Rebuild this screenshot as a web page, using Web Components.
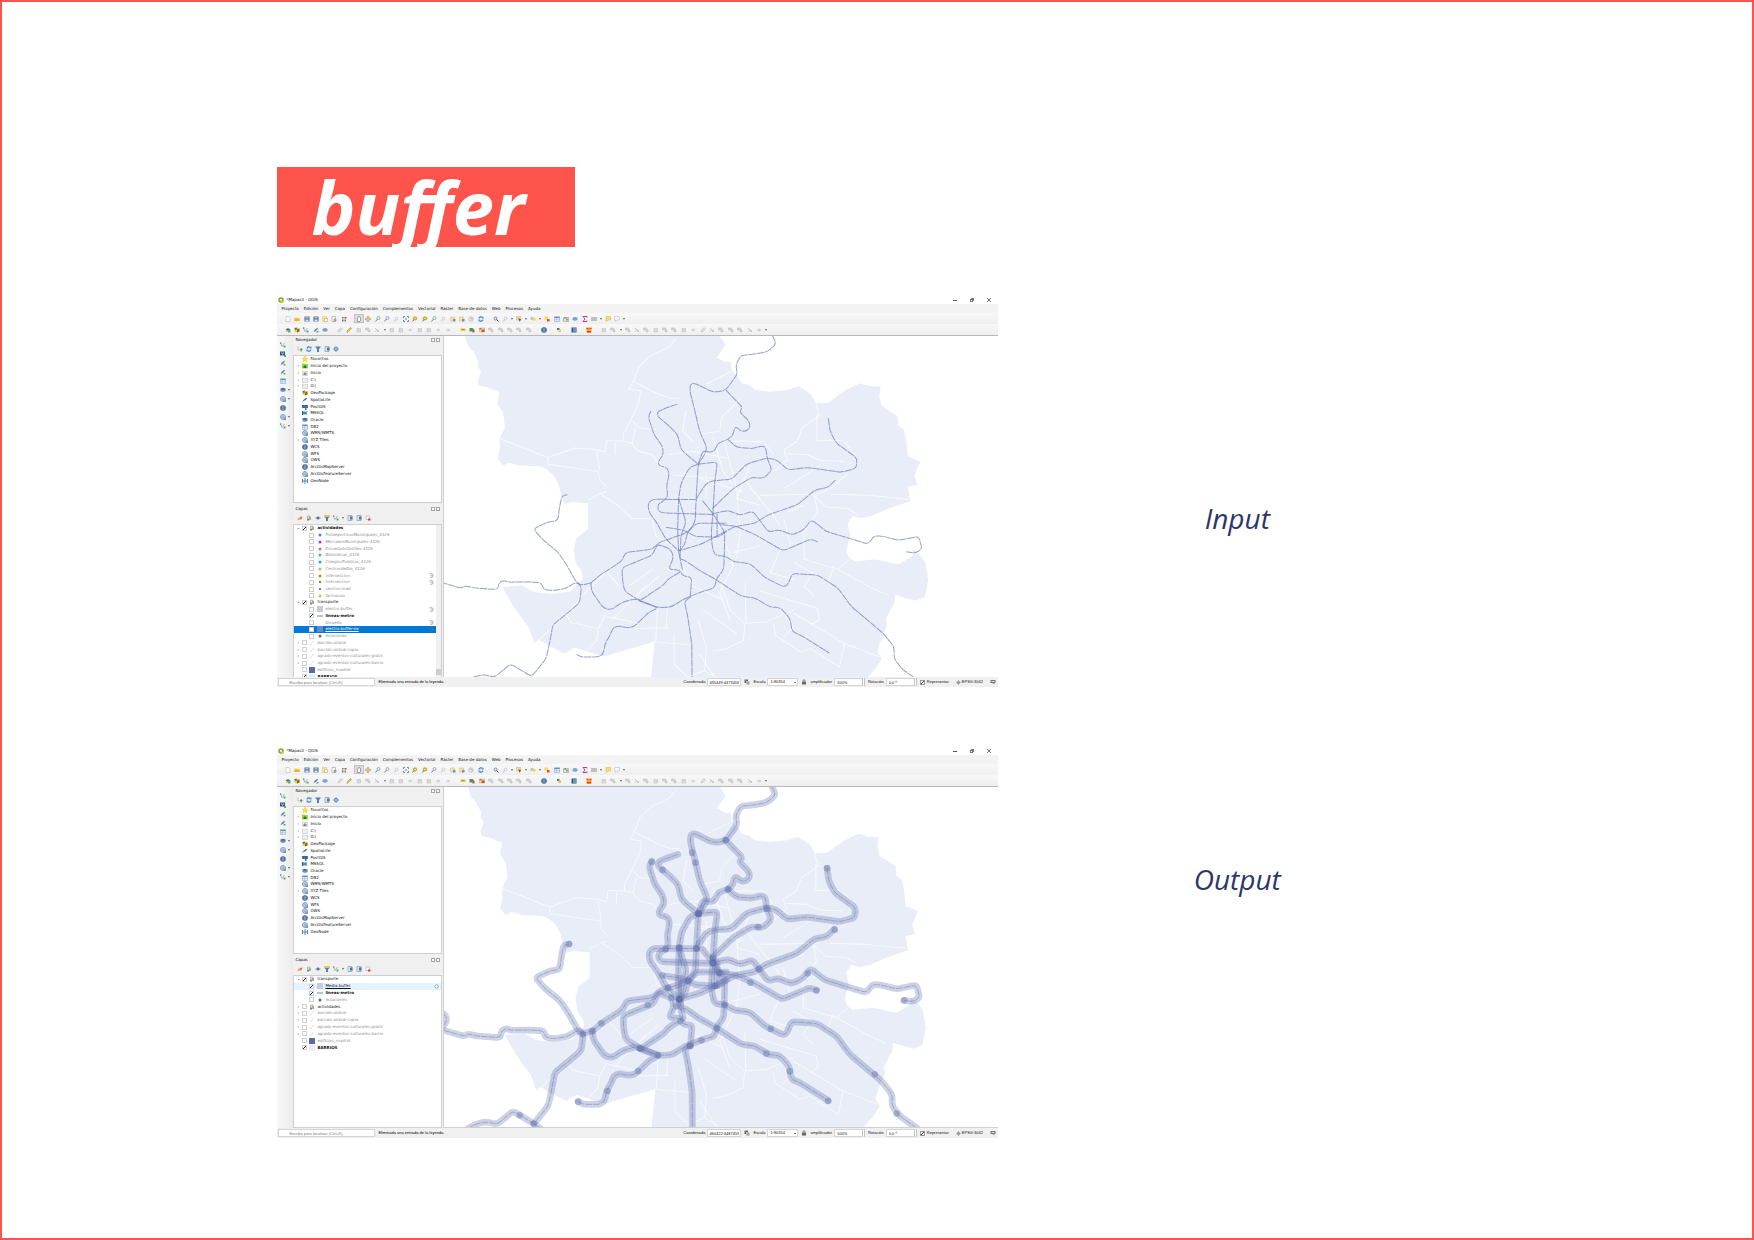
<!DOCTYPE html>
<html lang="es">
<head>
<meta charset="utf-8">
<title>buffer</title>
<style>
body{margin:0;background:#fff}
</style>
</head>
<body>
<slide-page>
  <slide-title slot="title">buffer</slide-title>
  <slide-figure style="--caption-top:202px">
    <qgis-window view="input" coord="435449:4473406"></qgis-window>
    <span slot="caption">Input</span>
  </slide-figure>
  <slide-figure style="--caption-top:112px">
    <qgis-window view="output" coord="460422:4487459"></qgis-window>
    <span slot="caption">Output</span>
  </slide-figure>
</slide-page>

<script>
const define = (name, render) => customElements.define(name, class extends HTMLElement {
  connectedCallback() {
    if (!this.shadowRoot) this.attachShadow({ mode: 'open' }).innerHTML = render(this);
  }
});

/* ---- small icon set, 12 x 12 grid ---- */
const B = '#3f74ad', G = '#b9b9b9', Y = '#f0c93a';
const shapes = {
  doc: '<path d="M2 1h6l2 3v7H2z" fill="#fff" stroke="#aaa"/>',
  open: '<path d="M1 3h4l1 1h5v6H1z" fill="#f5c63c"/><path d="M1 6h10v4H1z" fill="#e9b32b"/>',
  save: `<path d="M1 1h10v10H1z" fill="#4c6f99"/><path d="M3 1h6v4H3z" fill="#a9c0da"/><path d="M3 7h6v4H3z" fill="#dce6f0"/>`,
  layout: `<path d="M1 1h8v10H1z" fill="#fbe38a" stroke="${Y}"/><path d="M5 5h6v6H5z" fill="#fff" stroke="#999"/>`,
  layout2: '<path d="M2 1h7v10H2z" fill="#fff" stroke="#888"/><circle cx="8" cy="8" r="3" fill="#9a9a9a"/>',
  style: '<path d="M2 2h3v3H2zM2 7h3v4H2z" fill="#4a8a55"/><path d="M7 2h4v3H7z" fill="#b44b45"/><path d="M7 7h3v4H7z" fill="#777"/>',
  hand: '<path d="M3 11V5l1-1V2h1l1-1 1 1h1l1 2v5l-1 2z" fill="#fff" stroke="#555"/>',
  pan: `<path d="M6 0l3 3H3zM6 12l3-3H3zM0 6l3-3v6zM12 6L9 3v6z" fill="#637f9f"/><path d="M3 3h6v6H3z" fill="${Y}"/>`,
  zoom: '<circle cx="5" cy="5" r="3" fill="#dce8f4" stroke="#5c7795" stroke-width="1.5"/><path d="M7 7l4 4" stroke="#444" stroke-width="2"/>',
  zoomp: '<circle cx="7" cy="4" r="3" fill="#e6edf4" stroke="#7f93a8" stroke-width="1.3"/><path d="M5 6l-4 5" stroke="#777" stroke-width="1.8"/>',
  zoomy: `<path d="M1 1h10v7H1z" fill="#f8df62"/><circle cx="6" cy="5" r="3" fill="none" stroke="#777" stroke-width="1.3"/><path d="M4 7l-3 4" stroke="#777" stroke-width="2"/>`,
  zoomg: '<circle cx="7" cy="5" r="3" fill="none" stroke="#b7bfc8" stroke-width="1.3"/><path d="M5 7l-3 4" stroke="#bbb" stroke-width="1.6"/>',
  full: `<path d="M1 4V1h3M8 1h3v3M11 8v3H8M4 11H1V8" fill="none" stroke="${B}" stroke-width="1.6"/><circle cx="6" cy="6" r="2" fill="#9ab"/>`,
  mark: '<path d="M1 2h8v8H1z" fill="#fbe48a" stroke="#b8b8b8"/><path d="M6 6h5v5H6z" fill="#6d93bd"/>',
  clock: '<circle cx="6" cy="6" r="4.5" fill="#f1f1f1" stroke="#999"/><path d="M6 3v3h3" fill="none" stroke="#777"/>',
  refresh: '<path d="M2 5a4 4 0 0 1 7-2M10 7a4 4 0 0 1-7 2" fill="none" stroke="#3b83c8" stroke-width="2.4"/><path d="M11 1v4H7zM1 11V7h4z" fill="#3b83c8"/>',
  select: '<path d="M1 1h8v7H1z" fill="#f8e070" stroke="#a8a8a8"/><path d="M5 4l6 4-3 1-1 3z" fill="#555"/>',
  info: '<path d="M1 2h6v6H1z" fill="#b9c8d6"/><path d="M5 4h6v5H5z" fill="#f5d442"/>',
  del: '<path d="M1 1h7v6H1z" fill="#f8d948"/><path d="M6 6h5v5H6z" fill="#d64e43"/>',
  table: '<path d="M1 1h10v10H1z" fill="#e3edf7" stroke="#7aa0c6"/><path d="M1 2h10v2H1z" fill="#5c8cbc"/><path d="M1 7h10M5 4v7" stroke="#9ab8d6"/>',
  stats: '<path d="M1 3h10v8H1z" fill="#e5e5e5" stroke="#888"/><path d="M3 2h2v4H3z" fill="#4a9a5a"/><path d="M6 5h4v4H6z" fill="#999"/>',
  tip: '<path d="M1 4q5-4 10 0v4q-5 3-10 0z" fill="#7ba3cf"/>',
  flag: '<path d="M0 2h2v8H0z" fill="#35567a"/><path d="M2 3h9l-2 3 2 3H2z" fill="#4f86bb"/>',
  elephant: '<path d="M0 2h12v6H9v4H6V8H0z" fill="#3a6ea5"/>',
  sigma: '<path d="M10 3V1H2l4 5-4 5h8V9" fill="none" stroke="#a2369b" stroke-width="1.8"/>',
  ruler: '<path d="M0 3h12v2H0zM0 7h12v2H0z" fill="#8a8a8a"/>',
  note: '<path d="M2 1h9v7H6l-4 4V8z" fill="#f6df6b" stroke="#d5b843"/>',
  noteg: '<path d="M1 1h10v7H6l-3 3V8H1z" fill="#f4f7fa" stroke="#aebccb"/>',
  layer: `<path d="M1 5l5-3 5 3-5 4z" fill="${B}"/><path d="M6 6h5v5H6z" fill="#6bb06a"/><path d="M2 6h3v4H2z" fill="${Y}"/>`,
  cube: `<path d="M1 3l5-2 5 2v6l-5 2-5-2z" fill="${Y}"/><path d="M6 5l5-2v6l-5 2z" fill="#8a6d1d"/><path d="M1 2l4-1 1 4-4 1z" fill="${B}"/>`,
  vec: '<path d="M1 2l3 7 5-7" fill="none" stroke="#7c93a9" stroke-width="1.3"/><path d="M7 7h4v4H7z" fill="#5fae5c"/><circle cx="1.5" cy="2" r="1.4" fill="#567"/>',
  feather: '<path d="M1 11Q2 4 10 1 9 8 3 9z" fill="#5c86b4"/><path d="M7 8h4v3H7z" fill="#5fae5c"/>',
  plume: '<path d="M0 11Q3 3 11 1 9 7 3 8z" fill="#3f6f9f"/>',
  check: '<path d="M0 1h10v8H0z" fill="#2c5683"/><path d="M2 3h2v2H2zM6 3h2v2H6zM4 5h2v2H4z" fill="#dce8f4"/><path d="M8 8h4v4H8z" fill="#5fae5c"/>',
  db: `<path d="M1 3q5-3 10 0v5q-5 3-10 0z" fill="${B}"/><path d="M1 6q5 3 10 0" fill="none" stroke="#a9c7e3"/>`,
  pencil: `<path d="M2 11l1-4 6-6 2 2-6 6z" fill="${Y}" stroke="#8b7b4b"/>`,
  edit: `<path d="M2 10l1-4 5-5 3 3-5 5z" fill="#ddd" stroke="${G}"/>`,
  g1: `<path d="M2 3h7v7H2z" fill="#e4e4e4" stroke="${G}"/><path d="M2 6h7" stroke="${G}"/>`,
  g2: `<path d="M1 2h6l3 5v3H7L5 6H1z" fill="#d4d4d4" stroke="${G}"/>`,
  g3: `<path d="M2 2l8 8M2 9l4-4" stroke="${G}" stroke-width="1.6"/><path d="M6 6h4v4H6z" fill="#ccc"/>`,
  g4: `<path d="M2 6h7M6 3l3 3-3 3" fill="none" stroke="${G}" stroke-width="1.4"/>`,
  label: `<path d="M1 3h10v5H1z" fill="${Y}"/><path d="M3 5h6v1H3z" fill="#555"/>`,
  tag: '<path d="M1 2h6l4 4-4 3H1z" fill="#449a53"/><path d="M7 6h4v5H7z" fill="#d64e43"/>',
  legend: '<path d="M1 2h10v8H1z" fill="#fce183" stroke="#c9a233"/><path d="M5 5h6v5H5z" fill="#c4534a"/><path d="M1 2h4v3H1z" fill="#508bc7"/>',
  globe: '<circle cx="6" cy="6" r="5.500" fill="#2c5683"/><path d="M1 6h10M6 1v10M3 3q3 2 6 0M3 9q3-2 6 0" fill="none" stroke="#b7d0e8"/>',
  globel: '<circle cx="6" cy="6" r="5" fill="#e3edf6" stroke="#4a7aac" stroke-width="1.3"/><path d="M1 6h10M6 1v10" stroke="#4a7aac"/><path d="M7 7h5v5H7z" fill="#7d9bb8"/>',
  python: `<path d="M2 2h5v4H2z" fill="#3b73ac"/><path d="M5 5h5v5H5z" fill="${Y}"/>`,
  book: '<path d="M1 1h10v10H1z" fill="#2c5683"/><path d="M4 2h6v8H4z" fill="#6d93bd"/>',
  osm: '<path d="M1 1h10v10H1z" fill="#f7a32c"/><path d="M1 1l5 3 5-3v3H1zM2 8h8v3H2z" fill="#e0382c"/>',
  filter: '<path d="M0 1h12L8 6v6H4V6z" fill="#4e82b8"/>',
  filtery: '<path d="M0 3h12L8 7v5H4V7z" fill="#4e82b8"/><path d="M0 0h12v3H0z" fill="#ecc93c"/>',
  add: '<path d="M2 1v7h6" fill="none" stroke="#999"/><path d="M6 7h5M8.500 4v7" stroke="#4aa35b" stroke-width="2"/>',
  tree: '<path d="M2 1h8v10H2z" fill="#dde7f1" stroke="#6c7d8e"/><path d="M6 3h5v6H6z" fill="#4a76a5"/>',
  gear: `<circle cx="6" cy="6" r="3.500" fill="none" stroke="#6f9fcf" stroke-width="2.500"/><path d="M6 0v12M0 6h12" stroke="#6f9fcf" stroke-width="1.500"/>`,
  gearg: `<circle cx="6" cy="6" r="3" fill="#999" stroke="#999" stroke-width="2"/><path d="M6 0v12M0 6h12" stroke="#999" stroke-width="1.500"/>`,
  snow: '<path d="M6 0v12M1 2v8M11 2v8M1 6h10" stroke="#4a86c0" stroke-width="2"/>',
  star: '<path d="M6 0l2 4 4 .5-3 3 1 4.500-4-2.500L2 12l1-4.500-3-3L4 4z" fill="#fae13a" stroke="#d8b51c" stroke-width=".7"/>',
  home: '<path d="M0 1h5l1 1h6v9H0z" fill="#8fe03f"/><path d="M3 7l3-3 3 3v3H3z" fill="#2b7a2b"/>',
  homeg: '<path d="M0 2h5l1 1h6v8H0z" fill="#eee" stroke="#bbb"/><path d="M3 7l3-3 3 3v3H3z" fill="#888"/>',
  folder: '<path d="M1 2h4l1 1h5v8H1z" fill="#eee" stroke="#bbb"/>',
  eye: '<path d="M1 6q5-6 10 0-5 6-10 0z" fill="#cbd8e6" stroke="#56789b"/><circle cx="6" cy="6" r="2" fill="#35567a"/>',
  brush: '<path d="M1 8l6-5 4 1-3 5-7 1z" fill="#f0a23a"/><path d="M6 5l5-2-3 6z" fill="#c66"/>',
  group: '<path d="M3 2h5v6H3z" fill="#ddd" stroke="#888"/><path d="M6 4h4v6H6z" fill="#aaa"/><path d="M2 8h4v3H2z" fill="#6a8f6a"/>',
  remove: '<path d="M2 2h7v7H2z" fill="#fff" stroke="#9a9a9a"/><path d="M6 7h5v4H6z" fill="#d9423a"/>',
  bubble: '<path d="M1 2h10v6H8l1 3-4-3H1z" fill="#777"/><path d="M3 4h6v2H3z" fill="#ddd"/>',
  lock: '<path d="M2 5h8v6H2z" fill="#666"/><path d="M4 5V2h4v3" fill="none" stroke="#777" stroke-width="1.500"/>',
  extent: '<path d="M1 1h7v4H5v3H1z" fill="#666"/><path d="M5 5h6v6H5z" fill="#999"/><path d="M3 3l6 6" stroke="#fff"/>',
  line: '<path d="M0 6h12" stroke="#7380b5" stroke-width="2"/>',
  slash: '<path d="M3 10l2-3M7 5l2-3" stroke="#c8b8b8" stroke-width="1.300"/>',
  chip: '<path d="M1 2h7q4 4 0 8H3" fill="none" stroke="#777" stroke-width="1.500"/><path d="M4 6h4" stroke="#777"/>',
  ring: '<circle cx="6" cy="6" r="4" fill="#fff" stroke="#777" stroke-width="1.500"/>'
};
const dotColors = { blue: '#5b73e8', magenta: '#e31ae0', red: '#e0705f', cyan: '#15c8dc', green: '#20c583', orange: '#e8ae40', olive: '#9aa820', dark: '#44506a', lime: '#a8d850', forest: '#4a7a5a' };
const squareColors = { lilac: '#c6cae2', steel: '#6488c4', navy: '#5c6aa4', pale: '#e9edf7' };
const icon = (name, size = 6) => {
  let body = shapes[name] || '';
  if (dotColors[name]) body = `<circle cx="6" cy="6" r="${name === 'dark' ? 2 : 3}" fill="${dotColors[name]}"/>`;
  if (squareColors[name]) body = `<path d="M0 0h12v12H0z" fill="${squareColors[name]}"/>`;
  return `<svg width="${size}" height="${size}" viewBox="0 0 12 12" aria-hidden="true">${body}</svg>`;
};

/* ---- page ---- */
define('slide-page', () => `
<style>
:host{display:block;box-sizing:border-box;min-height:100vh;border:2px solid #ff544b;padding:165px 15.7% 60px;background:#fff}
main{display:flex;flex-direction:column;gap:60px}
header{margin-bottom:49px}
</style>
<header><slot name="title"></slot></header>
<main><slot></slot></main>`);

define('slide-title', () => `
<style>
:host{display:block}
h1{margin:0;box-sizing:border-box;width:298px;max-width:100%;height:80px;padding-left:34px;background:#ff544b;color:#fff;
font:italic 700 74px/80px "Open Sans",sans-serif;overflow:hidden}
</style>
<h1><slot></slot></h1>`);

define('slide-figure', () => `
<style>
:host{display:block}
figure{margin:0;display:grid;grid-template-columns:minmax(0,721fr) minmax(0,479fr)}
figcaption{padding-top:var(--caption-top);text-align:center;color:#2b3768;font:italic 400 28px/40px "Open Sans",sans-serif}
</style>
<figure><slot></slot><figcaption><slot name="caption"></slot></figcaption></figure>`);

/* ---- toolbar: groups "width:icons", "v" is a drop-down arrow, "*" marks a pressed tool ---- */
define('qgis-toolbar', el => `
<style>
:host{display:flex;height:11px;align-items:center;background:linear-gradient(#f8f8f8,#efefef);overflow:hidden}
.handle{width:6px;flex:none;height:6px;background:radial-gradient(circle,#c4c4c4 40%,transparent 50%) center/2px 2px repeat-y}
.group{display:flex;flex:none;align-items:center}
button{flex:2 1 0;min-width:0;height:9px;padding:0;border:0;background:none;display:grid;place-items:center}
button.on{background:#dcdcdc;box-shadow:0 0 0 1px #c2c2c2 inset}
.v{flex:1 1 0;display:grid;place-items:center}
.v::after{content:"";border:1px solid transparent;border-top:2px solid #666;border-bottom:0}
</style>
${el.getAttribute('groups').split('|').map(g => {
  const [w, list] = g.split(':');
  return `<span class="handle"></span><div class="group" style="width:${w}px">${list.trim().split(' ').map(n =>
    n === 'v' ? '<span class="v"></span>'
    : `<button type="button" aria-label="${n.replace('*', '')}"${n[0] === '*' ? ' class="on"' : ''}>${icon(n.replace('*', ''))}</button>`).join('')}</div>`;
}).join('')}`);

/* ---- dock panel ---- */
define('qgis-dock', el => `
<style>
:host{display:flex;flex-direction:column;min-height:0}
header{display:flex;align-items:center;justify-content:space-between;height:7px;padding:0 2px;font-size:4px;line-height:7px;color:#111}
.ctl{display:flex;gap:1px}
.ctl button{width:4px;height:4px;padding:0;border:1px solid #a5a5a5;background:#fff}
nav{display:flex;align-items:center;height:12px;padding-left:2px}
nav button{width:9px;height:9px;padding:0;border:0;background:none;display:grid;place-items:center}
.v{width:5px}
.v::after{content:"";display:block;width:0;margin:auto;border:1px solid transparent;border-top:2px solid #666;border-bottom:0}
.box{flex:1;min-height:0;background:#fff;border:1px solid #cfcfcf;overflow:hidden;display:flex}
::slotted(*){flex:1;min-width:0}
</style>
<header><span>${el.getAttribute('heading')}</span><span class="ctl"><button type="button" aria-label="Flotar"></button><button type="button" aria-label="Cerrar"></button></span></header>
<nav>${el.getAttribute('tools').split(' ').map(n => n === 'v' ? '<span class="v"></span>' : `<button type="button" aria-label="${n}">${icon(n)}</button>`).join('')}</nav>
<div class="box"><slot></slot></div>`);

const browserRows = [
  ['', 'star', 'Favoritos'], ['>', 'home', 'Inicio del proyecto'], ['>', 'homeg', 'Inicio'], ['>', 'folder', 'C:\\'], ['>', 'folder', 'G:\\'],
  ['', 'cube', 'GeoPackage'], ['', 'plume', 'SpatiaLite'], ['', 'elephant', 'PostGIS'], ['', 'flag', 'MSSQL'], ['', 'db', 'Oracle'], ['', 'table', 'DB2'],
  ['', 'globel', 'WMS/WMTS'], ['>', 'globel', 'XYZ Tiles'], ['', 'globe', 'WCS'], ['', 'globel', 'WFS'], ['', 'globel', 'OWS'],
  ['', 'globe', 'ArcGisMapServer'], ['', 'globel', 'ArcGisFeatureServer'], ['', 'snow', 'GeoNode']];
define('qgis-browser', () => `
<style>
ul{margin:0;padding:0;list-style:none;display:grid;grid-auto-rows:1fr;height:128px}
li{display:flex;align-items:center;font-size:4px;line-height:6px;color:#111;white-space:nowrap}
i{width:8px;text-align:center;font-style:normal;color:#333}
svg{margin-right:2px}
</style>
<ul>${browserRows.map(([a, i, t]) => `<li><i>${a ? '›' : ''}</i>${icon(i)}<span>${t}</span></li>`).join('')}</ul>`);

/* layer rows: [level, arrow, checked, icon, name, style, indicator] */
const tail = [
  [0, '›', 0, 'slash', 'barrido-airbnb', 'off'], [0, '›', 0, 'slash', 'barrido-airbnb-copia', 'off'],
  [0, '›', 0, 'slash', 'agrado-eventos-culturales-gratis', 'off'], [0, '›', 0, 'slash', 'agrado-eventos-culturales-barrio', 'off'],
  [0, '', 0, 'navy', 'edificios_madrid', 'off'], [0, '', 1, 'pale', 'BARRIOS', 'bold']];
const layerRows = {
  input: [
    [0, '⌄', 1, 'group', 'actividades', 'bold'],
    [1, '', 0, 'blue', 'PolideportivosMunicipales_4326', 'off'], [1, '', 0, 'magenta', 'MercadosMunicipales-4326', 'off'],
    [1, '', 0, 'red', 'EscuelasInfantiles-4326', 'off'], [1, '', 0, 'cyan', 'Bibliotecas_4326', 'off'],
    [1, '', 0, 'green', 'ColegiosPublicos_4326', 'off'], [1, '', 0, 'orange', 'CentrosdeDia_4326', 'off'],
    [1, '', 0, 'olive', 'interseccion', 'off', 'chip'], [1, '', 0, 'dark', 'interseccion', 'off', 'chip'],
    [1, '', 0, 'dark', 'centros-mad', 'off'], [1, '', 0, 'lime', 'farmacias', 'off'],
    [0, '⌄', 1, 'group', 'transporte', ''], [1, '', 0, 'lilac', 'electro.buffer', 'off', 'chip'],
    [1, '', 1, 'line', 'lineas-metro', 'bold'], [1, '', 0, '', 'Disuelto', 'off', 'chip'],
    [1, '', 0, 'steel', 'electro.buffer-ex', 'sel', 'chip'], [1, '', 0, 'forest', 'estaciones', 'off'], ...tail],
  output: [
    [0, '⌄', 1, 'group', 'transporte', ''], [1, '', 1, 'lilac', 'Media.buffer', 'hot', 'ring'],
    [1, '', 1, 'line', 'lineas-metro', 'bold'], [1, '', 0, 'forest', 'estaciones', 'off'],
    [0, '›', 0, 'group', 'actividades', ''], ...tail]
};
define('qgis-layers', el => {
  const view = el.getAttribute('view'), rows = layerRows[view];
  return `
<style>
:host{display:flex;overflow:hidden}
ul{flex:1;margin:0;padding:0;list-style:none;display:grid;grid-auto-rows:1fr;height:${view === 'input' ? 155 : 75}px}
li{display:flex;align-items:center;font-size:4px;line-height:6px;color:#111;white-space:nowrap}
i{width:8px;text-align:center;font-style:normal;color:#222}
label{display:flex;align-items:center;flex:1}
.l1{padding-left:7px}
input{appearance:none;box-sizing:border-box;width:5px;height:5px;margin:0 2px 0 0;border:1px solid #d0d0d0;background:#fff}
input:checked{background:linear-gradient(135deg,#fff 35%,#222 36% 65%,#fff 66%)}
svg{margin-right:2px}
.l1 svg{margin:0 2px 0 1px}
.off{color:#909090;font-style:italic}
.bold{font-weight:700}
.sel{background:#0078d7;color:#fff;font-style:italic;text-decoration:underline}
.hot{background:#e5f3ff;text-decoration:underline}
.l1 .ind svg{margin:0 2px}
.ind{display:flex}
.bar{width:5px;background:#f0f0f0;display:flex;flex-direction:column;justify-content:flex-end}
.bar::after{content:"";height:6px;margin-bottom:5px;background:#cdcdcd}
</style>
<ul>${rows.map(([l, a, c, i, t, s, ind]) => `<li class="l${l} ${s}"><i>${l ? '' : a}</i><label><input type="checkbox"${c ? ' checked' : ''}>${icon(i)}<span>${t}</span></label>${ind ? `<span class="ind">${icon(ind, 5)}</span>` : ''}</li>`).join('')}</ul>
${view === 'input' ? '<div class="bar"></div>' : ''}`;
});

/* ---- map ---- */
const districts = '84,18 95,50 110,65 125,95 122,110 132,123 122,150 125,165 150,170 187,185 180,220 198,245 203,290 187,322 188,352 181,380 197,403 215,393 245,402 310,405 330,415 350,435 362,460 370,490 380,516 400,510 450,514 450,590 415,618 407,655 413,690 430,715 433,740 418,752 400,775 340,783 290,778 255,758 195,762 225,815 275,885 290,930 302,918 345,942 378,960 410,942 450,955 497,968 647,924 635,1040 1270,1040 1305,1000 1320,975 1307,955 1312,935 1325,900 1335,880 1333,855 1358,810 1360,785 1380,792 1420,803 1448,792 1458,740 1450,690 1435,668 1415,650 1410,672 1370,695 1300,680 1240,687 1223,675 1215,655 1227,610 1219,575 1235,552 1260,558 1290,552 1340,530 1405,508 1397,465 1425,460 1417,430 1435,390 1398,375 1393,330 1385,295 1370,285 1367,255 1320,225 1313,195 1317,168 1285,167 1255,158 1210,180 1160,217 1125,217 1110,190 1075,167 1040,178 990,183 945,178 930,165 905,158 895,140 875,120 873,95 855,95 830,82 858,45 840,18';
const streets = `M710 25L690 50 630 80 600 110 585 150 570 175 605 180 600 215 575 270 553 310 555 330 505 328 500 362 475 355 410 350 330 378 187 322M580 150L640 182 690 202 720 203M330 378V398L480 420 485 445 503 465M475 360L485 420M503 480L485 485 450 505M485 485L540 522 580 560 635 560M580 270L600 290 650 295M590 290L580 340 600 360 640 370 670 410M530 335V370M555 330L580 335
M305 918L385 845 400 868 480 885 475 920 445 952M385 845L440 780 520 700M500 710L545 765M505 850L600 870M590 885L690 883M655 830L650 925 760 935M500 845L480 885M685 825L680 885M705 900V990L745 1030 795 1010M775 860L800 940 795 1010 835 1035M790 830L890 900M570 760L640 710M590 790L660 730M520 860L620 760M640 560L650 610 700 640M700 430L830 440M690 370L760 360 860 380M740 240L730 300 760 330M820 320L850 420 880 460M800 420V500M730 700L760 760 850 800M860 640L880 700 840 780 870 860
M880 120L800 160M900 205L845 260 840 300 780 310M1125 217L1135 255 1085 290 1070 330 1030 355 1040 385 1000 420M1128 250V328H1200M1040 367L1100 370 1140 387 1210 390M1210 330L1240 370M1220 425L1170 470 1120 490 1155 525 1220 530 1250 548M1170 487L1280 490 1400 502M960 490L1120 487M910 440L990 540 1020 580M850 320L890 470 900 600 890 680M780 440L910 480M1090 600V680L1190 710 1225 680M1190 710L1290 765 1340 787M840 740L870 830 915 872 910 920 860 945 820 952M915 750L918 870 980 865 1060 830M960 775L1130 825 1135 860 1110 875M1000 870L1005 905 1080 955 1110 945 1195 1000 1210 930 1315 970M1060 840L1210 930M1110 730L1090 760 1120 790M1020 650L990 720 1060 740M875 330L970 330 1000 370M930 400L890 500 960 520M1030 470L1080 440 1140 400M1120 490L1130 540 1090 600M1030 560L1050 640M780 960L830 1038M960 640L880 660M1040 540L1090 520M1060 690L1150 740M1180 700L1160 750M1020 830L1060 880 1030 910`;
/* each metro line is a list of x y pairs */
const metroLines = [
  '10 697 20 707 20 722 10 736', '12 748 75 766 85 758 110 765 182 770 185 750 200 742 212 748 275 747 312 750 317 770 345 773 385 766 412 748 430 757 458 750',
  '388 489 372 492 365 525 360 565 330 570 287 590 315 622 360 658 385 695 413 745 430 760 425 808 400 830 345 875 335 930 325 975 282 1028 220 990 172 1030 140 1022 105 1030 80 1046',
  '282 1028 310 1048', '458 750 485 727 550 685 560 660 640 650 660 630 690 620 745 600 770 573 860 573',
  '458 750 460 775 495 825 518 830 550 808 590 797 655 823 695 822 735 797 790 775 825 765 830 738 852 710 855 600 820 545 788 505',
  '752 795 757 733 730 730 722 712 688 710 703 675 695 650 655 635 640 668 550 705 552 745 558 775 603 803 675 755 685 740 722 718',
  '415 962 430 970 480 970 495 960 500 930 515 905 522 885 540 877 560 883 585 881 630 837 658 824 600 803',
  '752 793 735 805 745 850 757 930 758 1045', '636 240 628 258 645 310 670 345 673 370 657 390 660 403 685 408 690 430 682 462 686 490 678 505 658 515 656 532 665 542 820 547',
  '714 220 680 232 655 243 655 255 690 285 715 310 725 355 760 385 776 398',
  '995 14 1008 42 980 65 935 73 903 75 887 105 893 130 858 178 830 185 810 180 780 165 762 157 752 163 752 185 765 235 780 300 802 350 795 370 776 398 770 500',
  '858 178 908 230 898 242 928 272 930 290 915 302 900 298 890 288 883 292 880 310 865 325 835 335 825 358 810 363 790 358 776 398',
  '865 325 890 348 940 352 965 343 977 350 980 380 995 415 970 440 935 437 880 470 818 530',
  '1162 262 1167 300 1185 335 1247 380 1245 410 1200 422 1100 408 1042 415 1008 385 980 380 920 397 875 443 820 447 800 455 770 500 767 570 745 600 735 640 718 655',
  '1183 445 1160 468 1125 473 1070 518 980 550 945 573 885 583 820 617 785 635 718 655',
  '818 545 865 535 900 550 938 537 955 560 985 600 1015 592 1055 608 1090 592 1112 562 1155 597 1280 635 1298 610 1325 612 1370 624 1430 612 1440 650 1420 662 1393 658',
  '845 577 890 583 945 607 1028 655 1110 620 1130 628',
  '776 398 830 392 832 402 825 450 820 540 815 600 817 640 825 668 860 672 880 687 930 693 975 735 1030 762 1042 755 1055 722 1130 727 1190 765 1230 820 1325 900 1357 940 1357 975 1380 1005 1432 1042',
  '718 655 722 680 735 682 780 713 828 740 905 790 945 795 990 822 1018 823 1048 855 1055 895 1080 905 1165 958',
  '776 398 750 408 725 455 718 500 715 590 718 655', '770 503 640 502 627 515 630 540 655 575 680 620 718 655', '680 585 740 595 765 612 835 615 860 597',
  '718 500 740 570 725 610 722 680 730 712', '832 545 832 615'];
/* cut each corner once so that the lines bend softly, and keep both ends */
const soften = text => {
  const n = text.split(' ').map(Number), pts = [];
  for (let i = 0; i < n.length; i += 2) pts.push([n[i], n[i + 1]]);
  let d = `M${pts[0]}`;
  for (let i = 1; i < pts.length - 1; i++) {
    const [p, c, q] = [pts[i - 1], pts[i], pts[i + 1]];
    const near = o => { const k = Math.min(.5, 12 / Math.hypot(o[0] - c[0], o[1] - c[1])); return [c[0] + (o[0] - c[0]) * k, c[1] + (o[1] - c[1]) * k]; };
    d += `L${near(p)}Q${c} ${near(q)}`;
  }
  return d + `L${pts[pts.length - 1]}`;
};
const metro = metroLines.map(soften);
const nodes = [[388, 489], [430, 760], [485, 727], [415, 962], [503, 930], [595, 870], [624, 672], [636, 243], [668, 267], [282, 1028], [240, 1003], [776, 398], [718, 500], [678, 505], [770, 503], [668, 583], [745, 600], [695, 650], [718, 655], [685, 620], [710, 676], [603, 803], [655, 823], [750, 795], [785, 778], [722, 720], [757, 215], [767, 245], [858, 178], [865, 325], [980, 383], [955, 438], [820, 545], [820, 530], [838, 575], [825, 615], [1162, 262], [1185, 446], [1104, 577], [1130, 628], [932, 605], [957, 564], [1393, 658], [855, 672], [993, 743], [832, 742], [980, 818], [1050, 871], [1165, 960], [1305, 880], [1371, 998]];
define('qgis-map', el => {
  const out = el.getAttribute('view') === 'output';
  return `
<style>
:host{display:block;min-width:0;overflow:hidden;background:#fff}
svg{display:block;width:100%;height:100%}
</style>
<svg viewBox="12 18 1662 1020" preserveAspectRatio="xMidYMid slice" role="img" aria-label="Madrid" fill="none" stroke-linejoin="round">
<polygon points="${districts}" fill="#e9edf7"/>
<path d="${streets}" stroke="#f8fafd" stroke-width="3"/>
${out ? `<g stroke="#4f5fa3" stroke-opacity=".28" stroke-width="20" stroke-linecap="round">${metro.map(d => `<path d="${d}"/>`).join('')}</g>
<g fill="#4f5fa3" fill-opacity=".34">${nodes.map(([x, y]) => `<circle cx="${x}" cy="${y}" r="10"/>`).join('')}</g>` : ''}
<g stroke="#6c7ab5" stroke-opacity="${out ? '.75' : '.7'}" stroke-width="${out ? 2 : 3}" stroke-dasharray="${out ? '20 3' : '22 2'}">${metro.map(d => `<path d="${d}"/>`).join('')}</g>
</svg>`;
});

/* ---- status bar ---- */
define('qgis-status', el => `
<style>
:host{display:flex;align-items:center;height:10px;background:#f0f0f0;font:4px/8px "Liberation Sans",sans-serif;color:#111;white-space:nowrap}
input,select{box-sizing:border-box;height:8px;margin:0;padding:0 2px;border:1px solid #d4d4d4;border-radius:0;background:#fff;font:inherit;line-height:6px;color:#111}
.find{width:97px;padding-left:10px;margin:0 3px 0 1px}
.find::placeholder{color:#777;opacity:1}
.msg{flex:1;color:#000}
form{display:flex;align-items:center;gap:3px;padding-right:2px}
label{display:flex;align-items:center;gap:2px}
.xy{width:34px;padding:0 1px}.z{width:31px}
select{width:31px;appearance:none;background:linear-gradient(#777,#777) 26px 3px/2px 1px no-repeat,#fff}
.z{border-right:3px double #c4c4c4}
input[type=checkbox]{appearance:none;width:5px;height:5px;padding:0;border-color:#999;background:linear-gradient(135deg,#fff 35%,#333 36% 60%,#fff 61%)}
.crs{display:flex;align-items:center;gap:1px;margin:0 4px}
button{padding:0;border:0;background:none;font:inherit;color:inherit}
</style>
<input class="find" type="search" aria-label="Localizar" placeholder="Escriba para localizar (Ctrl+K)">
<span class="msg">Eliminada una entrada de la leyenda.</span>
<form>
<label>Coordenada <input class="xy" value="${el.getAttribute('coord')}"></label>${icon('extent')}
<label>Escala <select><option>1:80354</option></select></label>${icon('lock')}
<label>amplificador <input class="z" value="100%"></label>
<label>Rotación <input class="z" value="0,0 º"></label>
<label><input type="checkbox" checked>Representar</label>
<button type="button" class="crs">${icon('gearg', 5)}EPSG:3042</button>${icon('bubble')}
</form>`);

/* ---- application window ---- */
const strip = ['vec', 'check', 'feather', 'feather', 'table', 'db v', 'globel v', 'globe', 'globel v', 'vec v'];
define('qgis-window', el => {
  const view = el.getAttribute('view');
  return `
<style>
:host{display:flex;flex-direction:column;height:391px;min-width:0;overflow:hidden;background:#fff;font:4px/8px "DejaVu Sans",sans-serif;color:#111}
.title{display:flex;align-items:center;height:8px;gap:2px;padding-left:1px}
.title span{flex:1}
.win{display:flex;gap:11px;padding-right:6px}
.win button{width:6px;height:6px;padding:0;border:0;background:none;display:grid;place-items:center}
.menu{display:flex;gap:5px;height:9px;align-items:center;padding-left:4px;background:#f3f3f3}
.menu a{color:inherit;text-decoration:none}
.body{flex:1;min-height:0;display:grid;grid-template-columns:16px 149px minmax(0,1fr);border-top:1px solid #b9b9b9;background:#f0f0f0}
.strip{padding-top:4px;display:flex;flex-direction:column;background:linear-gradient(90deg,#f8f8f8,#ececec)}
.strip button{height:9px;padding:0 0 0 3px;border:0;background:none;display:flex;align-items:center;gap:2px}
.strip .v{border:1px solid transparent;border-top:2px solid #666;border-bottom:0}
.docks{display:flex;flex-direction:column;gap:2px}
.top{height:167px;flex:none}
.bottom{flex:1}
qgis-map{margin-left:1px;border-left:1px solid #cfcfcf;border-bottom:1px solid #cfcfcf}
</style>
<div class="title"><svg width="6" height="6" viewBox="0 0 12 12" aria-hidden="true"><circle cx="6" cy="6" r="4" fill="#fff" stroke="#6fae2c" stroke-width="3"/><path d="M6 6l5 5" stroke="#e8c52a" stroke-width="3"/></svg><span>*Mapas3 - QGIS</span>
<div class="win"><button type="button" aria-label="Minimizar"><svg width="4" height="4" viewBox="0 0 4 4"><path d="M0 2h4v1H0z" fill="#555"/></svg></button><button type="button" aria-label="Restaurar"><svg width="4" height="4" viewBox="0 0 4 4"><path d="M1 0h3v3H3v1H0V1h1z" fill="#777"/><path d="M1 2h1v1H1z" fill="#fff"/></svg></button><button type="button" aria-label="Cerrar"><svg width="4" height="4" viewBox="0 0 4 4"><path d="M0 0l4 4M4 0L0 4" stroke="#777"/></svg></button></div></div>
<nav class="menu">${['Proyecto', 'Edición', 'Ver', 'Capa', 'Configuración', 'Complementos', 'Vectorial', 'Ráster', 'Base de datos', 'Web', 'Procesos', 'Ayuda'].map(t => `<a href="#">${t}</a>`).join('')}</nav>
<qgis-toolbar groups="65:doc open save save layout layout2 style|131:*hand pan zoomp zoomp zoomg full zoomy zoomy zoomp zoomg mark mark clock refresh|135:zoom zoomg v select v info v del table stats tip sigma ruler v note noteg v"></qgis-toolbar>
<qgis-toolbar groups="46:layer cube vec feather tip|117:edit pencil g1 g2 g3 v g1 g1 g4 g1 g1 g4 g4|75:label tag legend g2 g2 g2 g2 g2|9:globe|9:python|9:book|9:osm|169:g1 g2 v g2 g3 g2 g1 g2 g2 g1 g4 edit g3 g2 g2 g2 g3 g4 v"></qgis-toolbar>
<div class="body">
<div class="strip">${strip.map(s => { const [n, v] = s.split(' '); return `<button type="button" aria-label="${n}">${icon(n)}${v ? '<span class="v"></span>' : ''}</button>`; }).join('')}</div>
<div class="docks">
<qgis-dock class="top" heading="Navegador" tools="add refresh filter tree gear"><qgis-browser></qgis-browser></qgis-dock>
<qgis-dock class="bottom" heading="Capas" tools="brush group eye filtery vec v tree tree remove"><qgis-layers view="${view}"></qgis-layers></qgis-dock>
</div>
<qgis-map view="${view}"></qgis-map>
</div>
<qgis-status coord="${el.getAttribute('coord')}"></qgis-status>`;
});
</script>
</body>
</html>
